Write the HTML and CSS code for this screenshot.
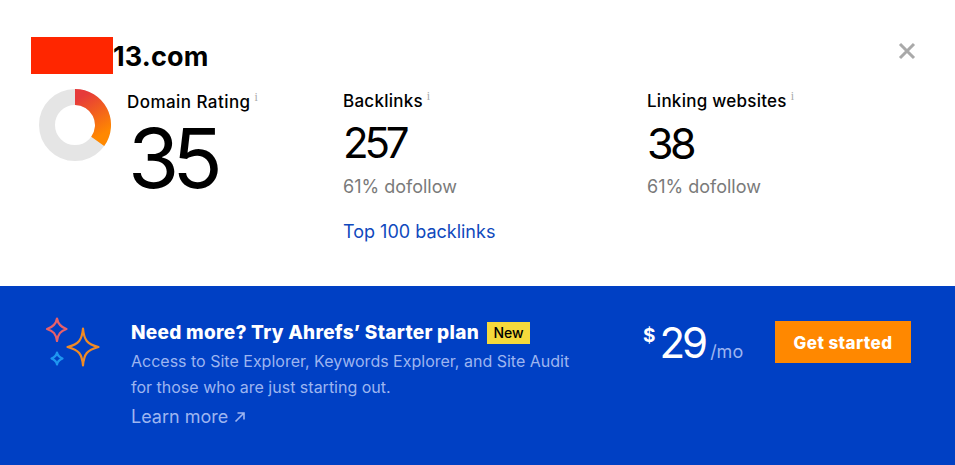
FILE: index.html
```html
<!DOCTYPE html>
<html lang="en">
<head>
<meta charset="utf-8">
<title>Website authority</title>
<link rel="stylesheet" href="styles.css">
</head>
<body>
<main class="dialog">
  <section class="top">
    <header class="head">
      <h1 class="domain"><span class="redact"></span>13.com</h1>
      <button class="close" aria-label="Close">
        <svg viewBox="0 0 18 18" width="18" height="18"><path d="M2 2 16 16M16 2 2 16" stroke="#a9a9a9" stroke-width="3" fill="none"/></svg>
      </button>
    </header>
    <div class="metrics">
      <div class="metric metric-dr">
        <svg class="donut" viewBox="0 0 72 72" width="72" height="72">
          <defs>
            <linearGradient id="dr" x1="0.2" y1="0" x2="0.6" y2="1">
              <stop offset="0" stop-color="#e63a3a"/>
              <stop offset="1" stop-color="#ff8800"/>
            </linearGradient>
          </defs>
          <circle cx="36" cy="36" r="28" fill="none" stroke="#e5e5e5" stroke-width="16"/>
          <path d="M36 8A28 28 0 0 1 58.7 52.4" fill="none" stroke="url(#dr)" stroke-width="16"/>
        </svg>
        <div class="dr-text">
          <div class="label label-wide">Domain Rating<sup class="info">i</sup></div>
          <div class="dr-value">35</div>
        </div>
      </div>
      <div class="metric metric-bl">
        <div class="label">Backlinks<sup class="info">i</sup></div>
        <div class="value value-tight">257</div>
        <div class="sub">61% dofollow</div>
        <a class="link" href="#">Top 100 backlinks</a>
      </div>
      <div class="metric metric-lw">
        <div class="label">Linking websites<sup class="info">i</sup></div>
        <div class="value">38</div>
        <div class="sub">61% dofollow</div>
      </div>
    </div>
  </section>
  <section class="promo">
    <svg class="sparks" viewBox="0 0 56 50" width="56" height="50">
      <path d="M12 1.500C13 7 15.500 10 21.500 12C15.500 14 13 17 12 24C11 17 8.500 14 2 12C8.500 10 11 7 12 1.500Z" fill="none" stroke="#e8606a" stroke-width="2.200" stroke-linejoin="round"/>
      <path d="M38 11.500C39 23 42 27 53.500 30C42 33 39 37 38 48.500C37 37 34 33 22.500 30C34 27 37 23 38 11.500Z" fill="none" stroke="#f08a24" stroke-width="2.200" stroke-linejoin="round"/>
      <path d="M12 35.500C12.500 38.500 14 40 17.500 41.500C14 43 12.500 44.500 12 47.500C11.500 44.500 10 43 6.500 41.500C10 40 11.500 38.500 12 35.500Z" fill="none" stroke="#1e96f0" stroke-width="2.200" stroke-linejoin="round"/>
    </svg>
    <div class="copy">
      <div class="title-row">
        <h2 class="title">Need more? Try Ahrefs’ Starter plan</h2>
        <span class="badge">New</span>
      </div>
      <p class="desc">Access to Site Explorer, Keywords Explorer, and Site Audit<br>for those who are just starting out.</p>
      <a class="more" href="#">Learn more
        <svg viewBox="0 0 12 12" width="12" height="12"><path d="M1.500 10.500 10 2M3.500 2H10V8.500" fill="none" stroke="#9db5f0" stroke-width="1.600"/></svg>
      </a>
    </div>
    <div class="price">
      <span class="cur">$</span><span class="amount">29</span><span class="per">/mo</span>
    </div>
    <a class="cta" href="#">Get started</a>
  </section>
</main>
</body>
</html>
```

FILE: styles.css
```css
* { box-sizing: border-box; }
html, body { margin: 0; padding: 0; }
body {
  width: 955px;
  height: 465px;
  overflow: hidden;
  background: #fff;
  font-family: Inter, "Liberation Sans", sans-serif;
  color: #000;
}
.dialog { display: flex; flex-direction: column; height: 465px; }
.top { height: 286px; padding: 36px 38px 0 31px; }
.head { display: flex; justify-content: space-between; align-items: flex-start; height: 50px; }
.domain {
  margin: 0;
  display: flex;
  align-items: center;
  font-size: 27px;
  line-height: 37px;
  font-weight: 700;
  letter-spacing: 0.15px;
  padding-top: 2px;
}
.redact { width: 82px; height: 37px; background: #ff2600; margin-top: -2px; }
.close { border: 0; background: none; padding: 0; margin-top: 6px; width: 20px; height: 18px; }
.metrics { display: flex; padding-left: 8px; }
.metric-dr { display: flex; width: 304px; padding-top: 3px; }
.metric-bl { width: 304px; padding-top: 3px; }
.metric-lw { padding-top: 3px; }
.donut { flex: none; margin-right: 16px; }
.dr-text { padding-top: 1px; }
.label { font-size: 17px; line-height: 24px; font-weight: 500; color: #000; white-space: nowrap; letter-spacing: 0.25px; }
.label-wide { letter-spacing: 0.45px; }
.info { font-family: "Liberation Serif", serif; font-size: 12px; color: #aaa; line-height: 0; margin-left: 4px; vertical-align: 7px; letter-spacing: 0; }
.dr-value { font-size: 83px; line-height: 80px; font-weight: 400; letter-spacing: -7px; margin: 4px 0 0 1px; }
.value { font-size: 43px; line-height: 48px; letter-spacing: -3.500px; margin-top: 6px; font-weight: 400; }
.value-tight { font-size: 42px; letter-spacing: -4.200px; }
.sub { font-size: 18px; line-height: 24px; color: #7a7a7a; margin-top: 8px; }
.link { display: block; font-size: 18px; line-height: 24px; color: #0f49bd; text-decoration: none; margin-top: 21px; }
.promo {
  flex: 1;
  background: #0040c4;
  display: flex;
  align-items: flex-start;
  padding: 31px 44px 0 45px;
  color: #fff;
}
.sparks { flex: none; margin-right: 30px; }
.copy { width: 512px; flex: none; }
.title-row { display: flex; align-items: center; height: 31px; }
.title { margin: 0; font-size: 19px; font-weight: 800; line-height: 32px; white-space: nowrap; letter-spacing: 0.28px; }
.badge { margin-left: 8px; background: #f5d93c; color: #000; font-size: 14px; font-weight: 500; line-height: 22px; padding: 0 6.500px; }
.desc { margin: 0; font-size: 16px; line-height: 26px; color: #9db5f0; }
.more { display: flex; align-items: center; gap: 6px; margin-top: 5px; font-size: 18px; line-height: 24px; color: #9db5f0; text-decoration: none; }
.price { flex: none; width: 132px; display: flex; align-items: baseline; }
.cur { font-size: 19px; font-weight: 700; align-self: flex-start; margin-top: 7px; margin-right: 4px; }
.amount { font-size: 42px; letter-spacing: -3px; line-height: 52px; }
.per { font-size: 18px; color: #9db5f0; margin-left: 5px; }
.cta {
  flex: none;
  width: 136px;
  height: 42px;
  margin-top: 4px;
  background: #ff8800;
  color: #fff;
  font-size: 17px;
  font-weight: 800;
  line-height: 44px;
  text-align: center;
  text-decoration: none;
  letter-spacing: 0.4px;
}
```
